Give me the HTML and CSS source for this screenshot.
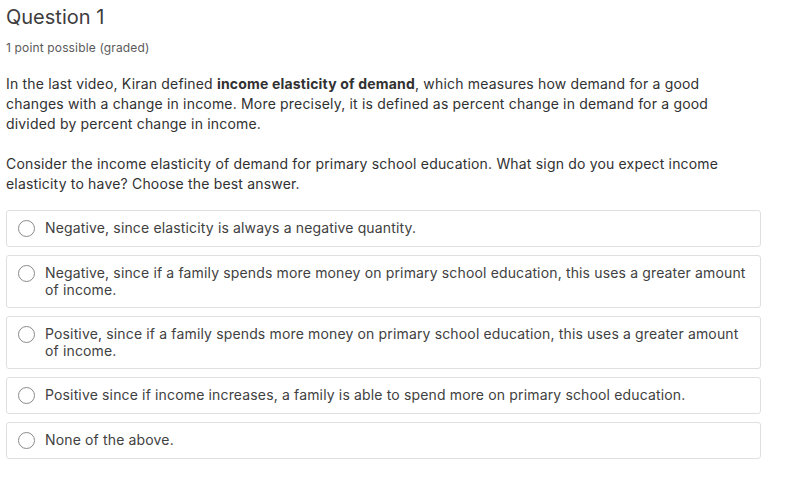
FILE: index.html
```html
<!DOCTYPE html>
<html lang="en">
<head>
<meta charset="utf-8">
<title>Question 1</title>
<link rel="stylesheet" href="styles.css">
</head>
<body>
<div class="problem">
  <h3 class="title">Question 1</h3>
  <div class="meta">1 point possible (graded)</div>
  <p class="para">In the last video, Kiran defined <strong>income elasticity of demand</strong>, which measures how demand for a good changes with a change in income. More precisely, it is defined as percent change in demand for a good divided by percent change in income.</p>
  <p class="para">Consider the income elasticity of demand for primary school education. What sign do you expect income elasticity to have? Choose the best answer.</p>
  <div class="options">
    <label class="option"><span class="radio"></span><span class="label">Negative, since elasticity is always a negative quantity.</span></label>
    <label class="option"><span class="radio"></span><span class="label">Negative, since if a family spends more money on primary school education, this uses a greater amount of income.</span></label>
    <label class="option"><span class="radio"></span><span class="label">Positive, since if a family spends more money on primary school education, this uses a greater amount of income.</span></label>
    <label class="option"><span class="radio"></span><span class="label">Positive since if income increases, a family is able to spend more on primary school education.</span></label>
    <label class="option"><span class="radio"></span><span class="label">None of the above.</span></label>
  </div>
</div>
</body>
</html>
```
FILE: styles.css
```css
html, body {
  margin: 0;
  padding: 0;
  background: #ffffff;
}
body {
  font-family: Inter, "Open Sans", "Liberation Sans", sans-serif;
  color: #313131;
}
.problem {
  padding: 4px 32px 0 6px;
}
.title {
  margin: 0;
  font-size: 20px;
  font-weight: 400;
  line-height: 26px;
  color: #3d3d3d;
}
.meta {
  margin-top: 10px;
  font-size: 12px;
  line-height: 16px;
  color: #5a5a5a;
  letter-spacing: 0.15px;
}
.para {
  margin: 18px 0 0 0;
  font-size: 14px;
  line-height: 20px;
  letter-spacing: 0.18px;
  color: #313131;
}
.para + .para {
  margin-top: 20px;
}
.options {
  margin-top: 16px;
  display: flex;
  flex-direction: column;
  gap: 8px;
}
.option {
  display: flex;
  align-items: flex-start;
  border: 1px solid #dfdfdf;
  border-radius: 3px;
  padding: 9px 8px 9px 11px;
  font-size: 14px;
  line-height: 16.5px;
  letter-spacing: 0.15px;
  color: #414141;
}
.radio {
  flex: none;
  width: 15px;
  height: 15px;
  border: 1px solid #8a8a8a;
  border-radius: 50%;
  margin: 0 10px 0 0;
  box-sizing: content-box;
}
.label {
  flex: 1;
}
```
